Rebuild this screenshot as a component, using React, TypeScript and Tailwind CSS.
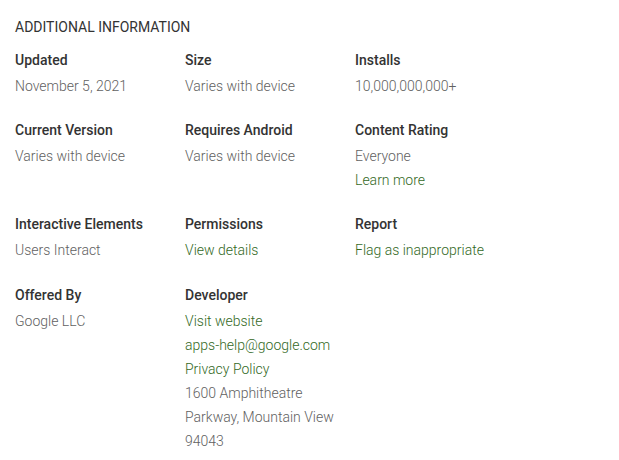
import React from "react";

type Line = { text: string; link?: boolean };
type Item = { label: string; lines: Line[] };

const rows: Item[][] = [
  [
    { label: "Updated", lines: [{ text: "November 5, 2021" }] },
    { label: "Size", lines: [{ text: "Varies with device" }] },
    { label: "Installs", lines: [{ text: "10,000,000,000+" }] },
  ],
  [
    { label: "Current Version", lines: [{ text: "Varies with device" }] },
    { label: "Requires Android", lines: [{ text: "Varies with device" }] },
    {
      label: "Content Rating",
      lines: [{ text: "Everyone" }, { text: "Learn more", link: true }],
    },
  ],
  [
    { label: "Interactive Elements", lines: [{ text: "Users Interact" }] },
    { label: "Permissions", lines: [{ text: "View details", link: true }] },
    { label: "Report", lines: [{ text: "Flag as inappropriate", link: true }] },
  ],
  [
    { label: "Offered By", lines: [{ text: "Google LLC" }] },
    {
      label: "Developer",
      lines: [
        { text: "Visit website", link: true },
        { text: "apps-help@google.com", link: true },
        { text: "Privacy Policy", link: true },
        { text: "1600 Amphitheatre Parkway, Mountain View 94043" },
      ],
    },
  ],
];

const InfoItem = ({ item }: { item: Item }) => (
  <div className="w-[170px] pr-4">
    <div className="text-[14px] leading-6 font-medium text-[#333333] mb-[2px]">
      {item.label}
    </div>
    {item.lines.map((l, i) => (
      <div
        key={i}
        className={`text-[14px] leading-6 font-light ${
          l.link ? "text-[#33691e]" : "text-[#616161]"
        }`}
      >
        {l.text}
      </div>
    ))}
  </div>
);

const App = () => {
  return (
    <div
      className="w-[619px] h-[460px] bg-white pl-[15px] pt-[15px]"
      style={{ fontFamily: "Roboto, 'Liberation Sans', sans-serif" }}
    >
      {/* heading */}
      <h2 className="text-[14px] leading-6 font-normal text-[#333333] uppercase mb-[9px]">
        Additional Information
      </h2>

      {/* grid rows */}
      <div className="flex flex-col gap-5">
        {rows.map((row, r) => (
          <div key={r} className={`flex ${r === 3 ? "mt-[1px]" : ""}`}>
            {row.map((item) => (
              <InfoItem key={item.label} item={item} />
            ))}
          </div>
        ))}
      </div>
    </div>
  );
};

export default App;
